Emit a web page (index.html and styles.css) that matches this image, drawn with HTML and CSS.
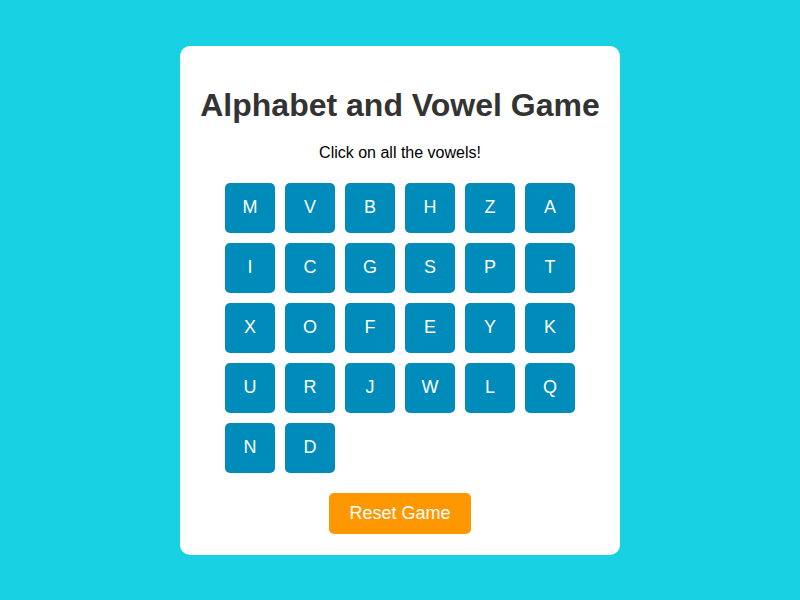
FILE: index.html
```html
<!DOCTYPE html>
<html lang="en">
<head>
<meta charset="utf-8">
<title>Alphabet and Vowel Game</title>
<link rel="stylesheet" href="styles.css">
</head>
<body>
<div class="card">
  <h1 class="title">Alphabet and Vowel Game</h1>
  <p class="hint">Click on all the vowels!</p>
  <div class="grid">
    <button class="tile">M</button><button class="tile">V</button><button class="tile">B</button><button class="tile">H</button><button class="tile">Z</button><button class="tile">A</button>
    <button class="tile">I</button><button class="tile">C</button><button class="tile">G</button><button class="tile">S</button><button class="tile">P</button><button class="tile">T</button>
    <button class="tile">X</button><button class="tile">O</button><button class="tile">F</button><button class="tile">E</button><button class="tile">Y</button><button class="tile">K</button>
    <button class="tile">U</button><button class="tile">R</button><button class="tile">J</button><button class="tile">W</button><button class="tile">L</button><button class="tile">Q</button>
    <button class="tile">N</button><button class="tile">D</button>
  </div>
  <button class="reset">Reset Game</button>
</div>
</body>
</html>
```

FILE: styles.css
```css
html, body {
  margin: 0;
  padding: 0;
  height: 100%;
}
body {
  background: #18d1e2;
  font-family: "Liberation Sans", Arial, sans-serif;
  display: flex;
  align-items: center;
  justify-content: center;
}
.card {
  width: 400px;
  padding: 20px 20px 21px;
  background: #ffffff;
  border-radius: 10px;
  text-align: center;
}
.title {
  font-size: 32px;
  font-weight: bold;
  color: #333333;
  margin: 21px 0 20px;
}
.hint {
  font-size: 16px;
  color: #000000;
  margin: 0 0 21px;
}
.grid {
  display: grid;
  grid-template-columns: repeat(6, 50px);
  gap: 10px;
  justify-content: center;
}
.tile {
  width: 50px;
  height: 50px;
  border: none;
  border-radius: 5px;
  background: #008cba;
  color: #ffffff;
  font-family: "Liberation Sans", Arial, sans-serif;
  font-size: 18px;
  padding: 0;
}
.reset {
  margin-top: 20px;
  height: 41px;
  padding: 0 20px;
  border: none;
  border-radius: 5px;
  background: #ff9800;
  color: #ffffff;
  font-family: "Liberation Sans", Arial, sans-serif;
  font-size: 18px;
}
```
